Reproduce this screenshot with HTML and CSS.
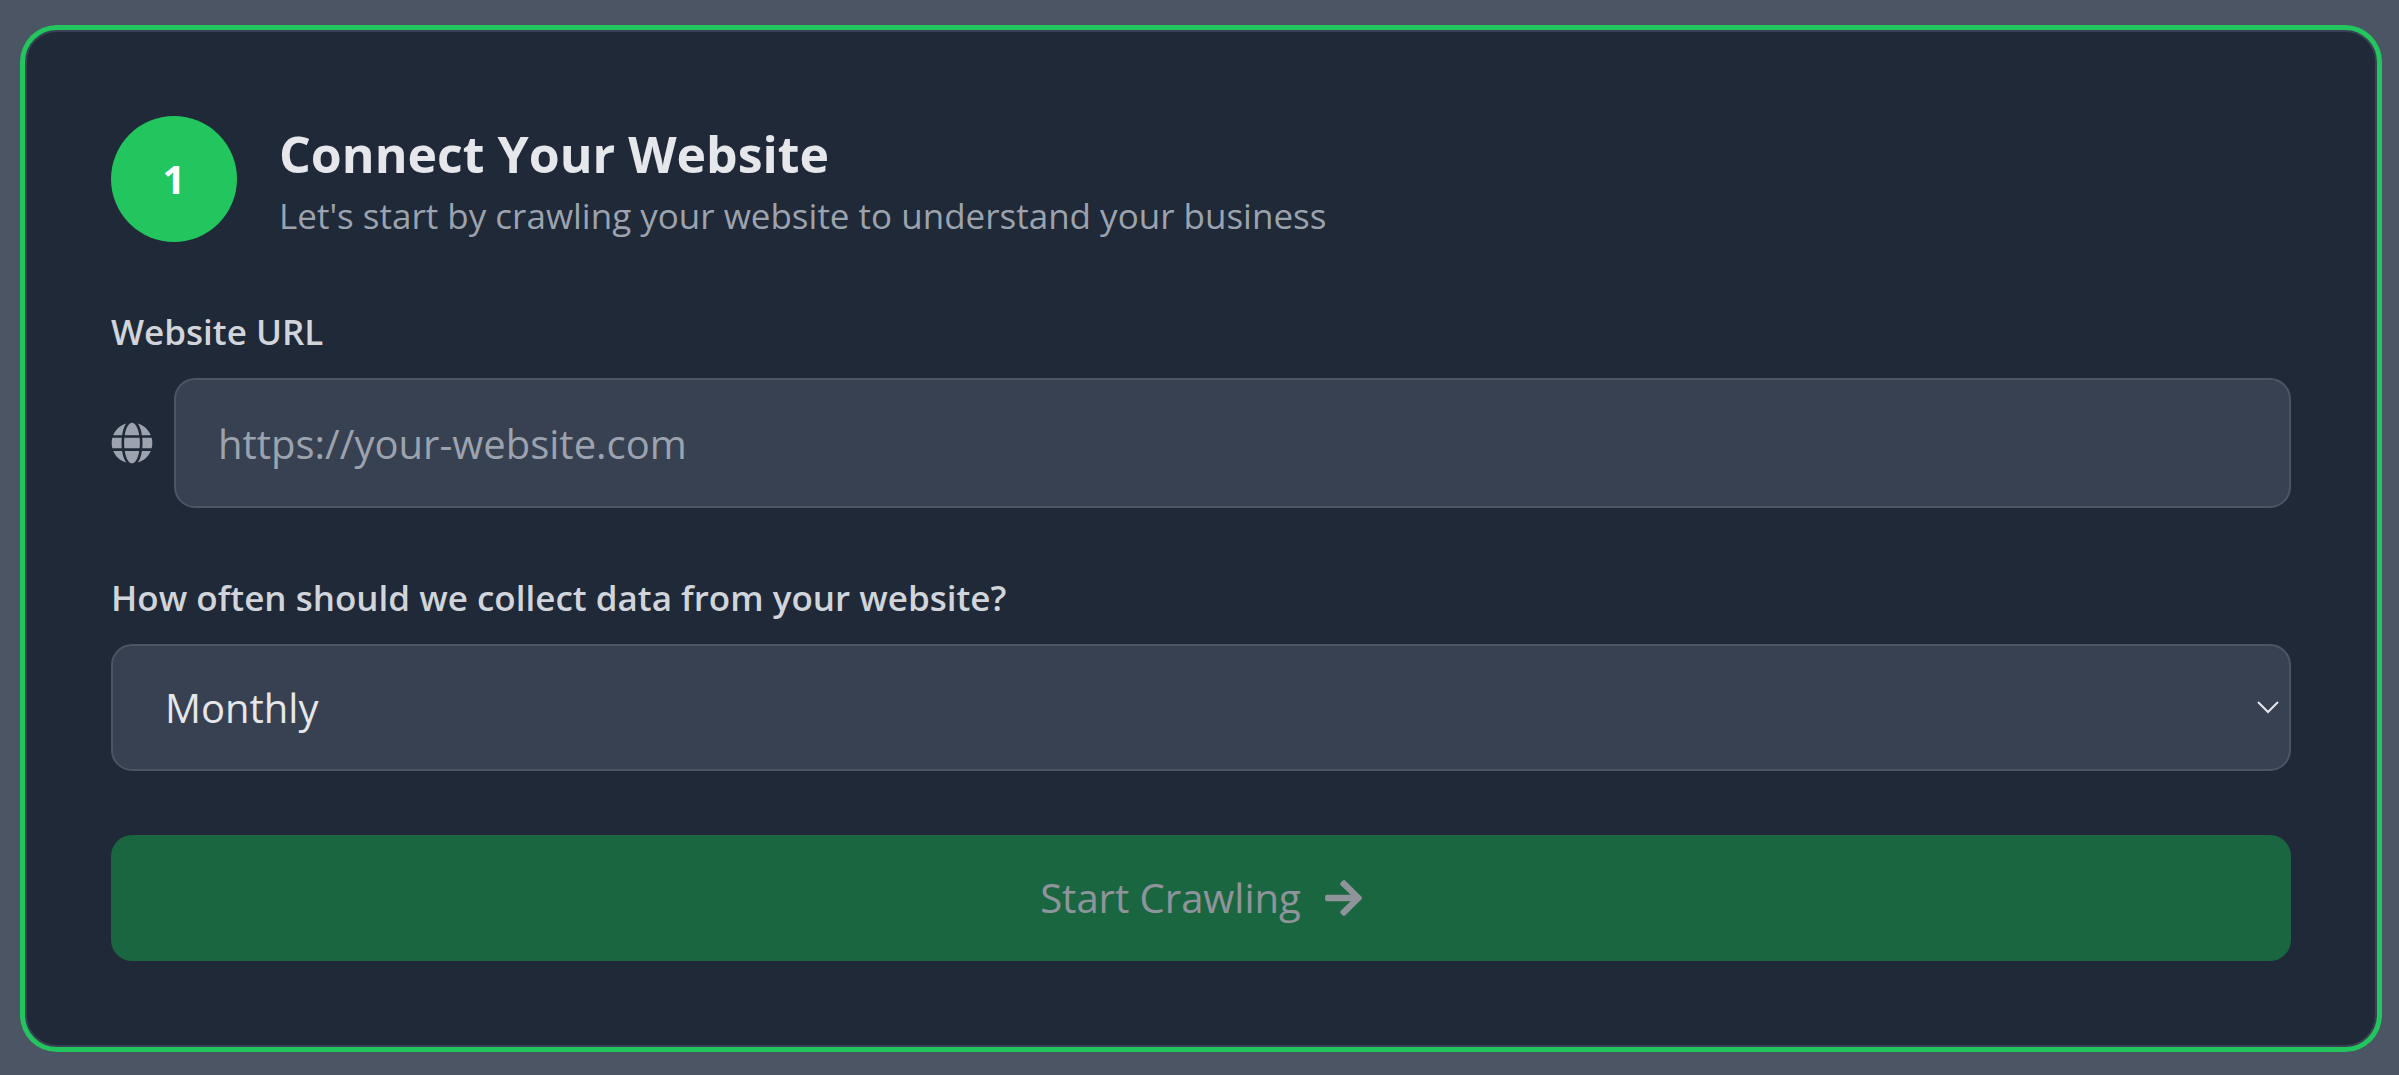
FILE: index.html
```html
<!DOCTYPE html>
<html lang="en">
<head>
<meta charset="utf-8">
<meta name="viewport" content="width=device-width, initial-scale=1">
<title>Connect Your Website</title>
<link rel="stylesheet" href="styles.css">
</head>
<body>
<main class="card">
  <header class="step">
    <span class="step-number">1</span>
    <div class="step-text">
      <h1 class="title">Connect Your Website</h1>
      <p class="subtitle">Let's start by crawling your website to understand your business</p>
    </div>
  </header>
  <form class="form">
    <div class="field">
      <label class="label" for="url">Website URL</label>
      <div class="url-row">
        <svg class="icon" viewBox="0 0 496 512" aria-hidden="true"><path fill="currentColor" d="M336.5 160C322 70.7 287.8 8 248 8s-74 62.7-88.5 152h177zM152 256c0 22.2 1.2 43.5 3.3 64h185.3c2.1-20.5 3.3-41.8 3.3-64s-1.2-43.500-3.300-64H155.300c-2.100 20.500-3.300 41.800-3.300 64zm324.700-96c-28.600-67.900-86.500-120.400-158-141.600 24.400 33.800 41.200 84.700 50 141.600h108zM177.200 18.400C105.800 39.600 47.800 92.100 19.300 160h108c8.700-56.900 25.500-107.800 49.900-141.600zM487.400 192H372.700c2.100 21 3.300 42.500 3.300 64s-1.200 43-3.300 64h114.600c5.500-20.500 8.600-41.800 8.600-64s-3.100-43.500-8.500-64zM120 256c0-21.500 1.200-43 3.300-64H8.600C3.200 212.500 0 233.800 0 256s3.200 43.500 8.600 64h114.600c-2-21-3.200-42.500-3.200-64zm39.500 96c14.500 89.300 48.700 152 88.500 152s74-62.700 88.500-152h-177zm159.300 141.600c71.400-21.200 129.400-73.700 158-141.600h-108c-8.800 56.900-25.600 107.800-50 141.600zM19.300 352c28.600 67.900 86.500 120.400 158 141.600-24.400-33.800-41.200-84.700-50-141.600h-108z"/></svg>
        <input class="control url" id="url" type="url" placeholder="https://your-website.com">
      </div>
    </div>
    <div class="field">
      <label class="label" for="frequency">How often should we collect data from your website?</label>
      <div class="select-wrap">
        <select class="control select" id="frequency">
          <option>Daily</option>
          <option>Weekly</option>
          <option selected>Monthly</option>
        </select>
        <svg class="chevron" viewBox="0 0 24 14" aria-hidden="true"><path d="M2 2l10 10L22 2" fill="none" stroke="currentColor" stroke-width="2"/></svg>
      </div>
    </div>
    <button class="submit" type="submit" disabled>
      <span>Start Crawling</span>
      <svg class="arrow" viewBox="0 0 448 512" aria-hidden="true"><path fill="currentColor" d="M190.5 66.9l22.2-22.2c9.4-9.4 24.6-9.4 33.9 0L441 239c9.4 9.4 9.4 24.6 0 33.9L246.6 467.3c-9.4 9.4-24.6 9.4-33.9 0l-22.2-22.2c-9.5-9.5-9.3-25 .4-34.3L311.4 296H24c-13.3 0-24-10.7-24-24v-32c0-13.3 10.7-24 24-24h287.400L190.900 101.200c-9.800-9.300-10-24.800-.4-34.300z"/></svg>
    </button>
  </form>
</main>
</body>
</html>
```
FILE: styles.css
```css
*,
*::before,
*::after {
  box-sizing: border-box;
}

body {
  margin: 0;
  padding: 30px 22px 28px 25px;
  background: #4b5563;
  color: #e5e7eb;
  font-family: "Segoe UI", "Open Sans", "Noto Sans", sans-serif;
  font-size: 40px;
  line-height: 60px;
}

.card {
  padding: 84px;
  border: 2px solid #374151;
  border-radius: 32px;
  background: #1f2937;
  box-shadow: 0 0 0 5px #22c55e;
}

.step {
  display: flex;
  align-items: center;
  gap: 42px;
  margin-bottom: 64px;
}

.step-number {
  display: flex;
  flex: none;
  align-items: center;
  justify-content: center;
  width: 126px;
  height: 126px;
  border-radius: 50%;
  background: #22c55e;
  color: #fff;
  font-weight: 700;
}

.title,
.subtitle {
  margin: 0;
}

.title {
  font-size: 50px;
  font-weight: 700;
  line-height: 74px;
}

.subtitle {
  color: #9ca3af;
  font-size: 35px;
  line-height: 50px;
}

.form,
.field {
  display: flex;
  flex-direction: column;
}

.form {
  gap: 64px;
}

.field {
  gap: 20px;
}

.label {
  color: #d1d5db;
  font-size: 35px;
  font-weight: 600;
  line-height: 52px;
}

.url-row {
  display: flex;
  align-items: center;
  gap: 21px;
}

.icon {
  flex: none;
  width: 42px;
  height: 42px;
  color: #9ca3af;
}

.control {
  width: 100%;
  margin: 0;
  border: 2px solid #4b5563;
  border-radius: 21px;
  background: #374151;
  color: #e5e7eb;
  font: inherit;
}

.url {
  flex: 1;
  min-width: 0;
  height: 130px;
  padding: 0 42px;
}

.url::placeholder {
  color: #9ca3af;
  opacity: 1;
}

.select-wrap {
  position: relative;
  display: flex;
}

.select {
  height: 127px;
  padding: 0 52px;
  appearance: none;
}

.chevron {
  position: absolute;
  top: 56px;
  right: 11px;
  width: 24px;
  height: 14px;
  pointer-events: none;
}

.submit {
  display: flex;
  align-items: center;
  justify-content: center;
  gap: 24px;
  height: 126px;
  padding: 0 42px;
  border: 0;
  border-radius: 21px;
  background: #16a34a;
  color: #fff;
  font: inherit;
  opacity: 0.5;
}

.arrow {
  width: 37px;
  height: 42px;
}
```
